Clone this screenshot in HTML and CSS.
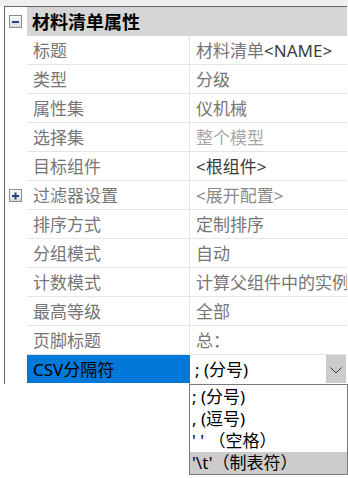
FILE: index.html
```html
<!DOCTYPE html>
<html>
<head>
<meta charset="utf-8">
<link rel="stylesheet" href="styles.css">
</head>
<body>
<div class="strip"></div>
<div class="grid">
  <div class="row head">
    <div class="gutter">
      <svg class="tog" width="13" height="13" viewBox="0 0 13 13"><defs><linearGradient id="g1" x1="0" y1="0" x2="0" y2="1"><stop offset="0" stop-color="#fbfbfb"/><stop offset="1" stop-color="#d8d8d8"/></linearGradient></defs><rect x="0.5" y="0.5" width="12" height="12" fill="url(#g1)" stroke="#8c8c8c"/><rect x="3" y="6" width="7" height="2" fill="#26428b"/></svg>
    </div>
    <div class="headcell">材料清单属性</div>
  </div>
  <div class="row"><div class="gutter"></div><div class="label">标题</div><div class="value">材料清单<span class="dark">&lt;NAME&gt;</span></div></div>
  <div class="row"><div class="gutter"></div><div class="label">类型</div><div class="value">分级</div></div>
  <div class="row"><div class="gutter"></div><div class="label">属性集</div><div class="value">仪机械</div></div>
  <div class="row"><div class="gutter"></div><div class="label">选择集</div><div class="value light">整个模型</div></div>
  <div class="row"><div class="gutter"></div><div class="label">目标组件</div><div class="value dark">&lt;根组件&gt;</div></div>
  <div class="row">
    <div class="gutter">
      <svg class="tog" width="13" height="13" viewBox="0 0 13 13"><defs><linearGradient id="g2" x1="0" y1="0" x2="0" y2="1"><stop offset="0" stop-color="#fbfbfb"/><stop offset="1" stop-color="#d8d8d8"/></linearGradient></defs><rect x="0.5" y="0.5" width="12" height="12" fill="url(#g2)" stroke="#8c8c8c"/><rect x="3" y="6" width="7" height="2" fill="#26428b"/><rect x="5.5" y="3.5" width="2" height="7" fill="#26428b"/></svg>
    </div>
    <div class="label">过滤器设置</div><div class="value mid">&lt;展开配置&gt;</div>
  </div>
  <div class="row"><div class="gutter"></div><div class="label">排序方式</div><div class="value">定制排序</div></div>
  <div class="row"><div class="gutter"></div><div class="label">分组模式</div><div class="value">自动</div></div>
  <div class="row"><div class="gutter"></div><div class="label">计数模式</div><div class="value">计算父组件中的实例</div></div>
  <div class="row"><div class="gutter"></div><div class="label">最高等级</div><div class="value">全部</div></div>
  <div class="row"><div class="gutter"></div><div class="label">页脚标题</div><div class="value">总：</div></div>
  <div class="row sel">
    <div class="gutter"></div>
    <div class="label active">CSV分隔符</div>
    <div class="value combo">
      <span class="ctext">; (分号)</span>
      <span class="btn"><svg width="20" height="28" viewBox="0 0 20 28"><polyline points="4.5,12.5 10,18 15.5,12.5" fill="none" stroke="#333" stroke-width="1"/></svg></span>
    </div>
  </div>
</div>
<div class="dropwrap">
  <div class="list">
    <div class="item">; (分号)</div>
    <div class="item">, (逗号)</div>
    <div class="item">' ' （空格）</div>
    <div class="item hl">'\t'（制表符）</div>
  </div>
</div>
</body>
</html>
```

FILE: styles.css
```css
html, body {
  margin: 0;
  padding: 0;
  background: #ffffff;
}
body {
  font-family: "Noto Sans", "Noto Sans CJK SC", sans-serif;
  font-size: 17px;
  color: #767676;
  height: 478px;
}
.strip {
  height: 6px;
  background: #f0f0f0;
}
.grid {
  margin: 0 1px 0 4px;
  border-top: 1px solid #646464;
  border-left: 1px solid #646464;
}
.row {
  display: flex;
  height: 29px;
}
.gutter {
  flex: none;
  width: 22px;
  box-sizing: border-box;
  padding-left: 4px;
  display: flex;
  align-items: center;
  background: #ffffff;
}
.tog {
  display: block;
}
.headcell {
  flex: 1;
  background: #d6d6d6;
  color: #000;
  font-weight: bold;
  font-size: 18px;
  line-height: 30px;
  padding-left: 5px;
  white-space: nowrap;
}
.label {
  flex: none;
  width: 163px;
  box-sizing: border-box;
  padding-left: 6px;
  border-right: 1px solid #e4e4e4;
  border-bottom: 1px solid #e4e4e4;
  line-height: 29px;
  white-space: nowrap;
  overflow: hidden;
}
.value {
  flex: 1;
  min-width: 0;
  box-sizing: border-box;
  padding-left: 6px;
  border-bottom: 1px solid #e4e4e4;
  line-height: 29px;
  white-space: nowrap;
  overflow: hidden;
}
.dark { color: #3c3c3c; }
.light { color: #a6a6a6; }
.mid { color: #8a8a8a; }
.label.active {
  background: #0078d7;
  color: #000;
  border-right: 1px solid #0078d7;
  border-bottom: 1px solid #ffffff;
}
.combo {
  display: flex;
  padding-left: 0;
  border-bottom: 1px solid #ffffff;
}
.ctext {
  flex: 1;
  padding-left: 5px;
  color: #000;
}
.btn {
  flex: none;
  width: 20px;
  height: 28px;
  background: #cccccc;
  margin-right: 1px;
}
.btn svg {
  display: block;
}
.dropwrap {
  padding-left: 189px;
}
.list {
  width: 159px;
  box-sizing: border-box;
  border: 1px solid #7a7a7a;
  background: #ffffff;
  padding-top: 1px;
}
.item {
  height: 22px;
  line-height: 22px;
  padding-left: 2px;
  color: #000;
  white-space: nowrap;
}
.item.hl {
  background: #cccccc;
}
```
